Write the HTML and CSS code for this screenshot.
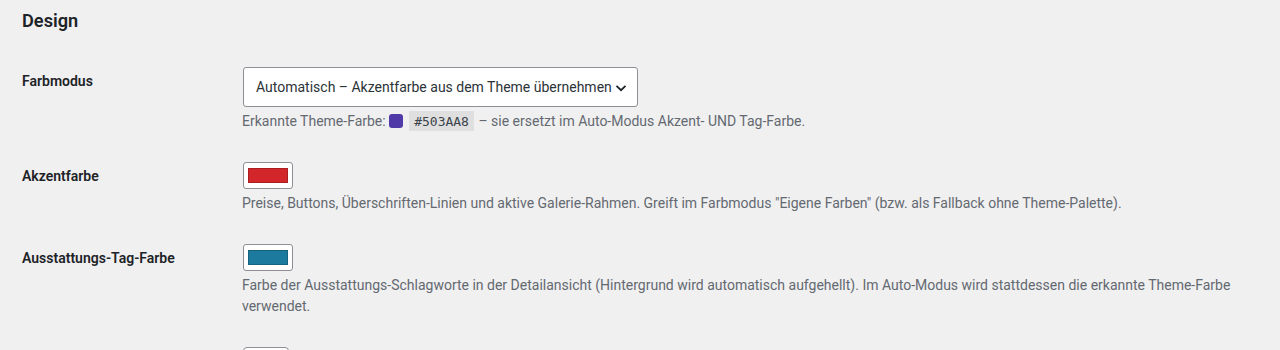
FILE: index.html
```html
<!DOCTYPE html>
<html lang="de">
<head>
    <meta name="viewport" content="width=device-width, initial-scale=1">
    <meta charset="utf-8">
    <link rel="stylesheet" href="styles.css">
</head>
<body>
<div class="wrap">
  <h2>Design</h2>

  <table class="form-table">
    <tr>
      <th>Farbmodus</th>
      <td>
        <div class="select-box">
          <select>
            <option>Automatisch – Akzentfarbe aus dem Theme übernehmen</option>
            <option>Eigene Farben</option>
          </select>
          <svg class="chevron" width="12" height="8" viewBox="0 0 12 8"><path d="M1.5 1.8 6 6.2 10.5 1.8" fill="none" stroke="#1d2327" stroke-width="1.8"/></svg>
        </div>
        <p class="description">
          Erkannte Theme-Farbe: <span class="swatch"></span><code>#503AA8</code> – sie ersetzt im Auto-Modus Akzent- UND Tag-Farbe.
        </p>
      </td>
    </tr>
    <tr>
      <th>Akzentfarbe</th>
      <td>
        <input type="color" value="#d3262b">
        <p class="description">Preise, Buttons, Überschriften-Linien und aktive Galerie-Rahmen. Greift im Farbmodus "Eigene Farben" (bzw. als Fallback ohne Theme-Palette).</p>
      </td>
    </tr>
    <tr>
      <th>Ausstattungs-Tag-Farbe</th>
      <td>
        <input type="color" value="#1b7a9e">
        <p class="description">Farbe der Ausstattungs-Schlagworte in der Detailansicht (Hintergrund wird automatisch aufgehellt). Im Auto-Modus wird stattdessen die erkannte Theme-Farbe verwendet.</p>
      </td>
    </tr>
    <tr>
      <th>Rahmenbreite</th>
      <td>
        <input type="number" class="small-text" value="2">
      </td>
    </tr>
  </table>
</div>
</body>
</html>
```

FILE: styles.css
```css
* {
  box-sizing: border-box;
}
body {
  margin: 0;
  background: #f0f0f1;
  color: #1d2327;
  font-family: Roboto, "Noto Sans", sans-serif;
  font-size: 14px;
  line-height: 1.3;
  overflow: hidden;
}

.wrap {
  padding: 0 20px 0 22px;
}
.wrap h2 {
  font-size: 18.2px;
  font-weight: 600;
  margin: 9px 0 19px;
}

.form-table {
  border-collapse: collapse;
  width: 100%;
}
.form-table th {
  width: 210px;
  padding: 20px 10px 20px 0;
  text-align: left;
  vertical-align: top;
  font-weight: 600;
  line-height: 1.3;
}
.form-table td {
  padding: 15px 10px;
  vertical-align: top;
}

.select-box {
  position: relative;
  display: inline-block;
  margin: 0 1px;
}
.select-box select {
  appearance: none;
  -webkit-appearance: none;
  height: 40px;
  width: 395px;
  padding: 0 24px 0 12px;
  border: 1px solid #8c8f94;
  border-radius: 3px;
  background: #fff;
  color: #2c3338;
  font-family: inherit;
  font-size: 14px;
  display: block;
}
.chevron {
  position: absolute;
  right: 11px;
  top: 17px;
}

.description {
  margin: 4px 0 0;
  color: #646970;
  font-size: 14px;
  line-height: 1.5;
}
.swatch {
  display: inline-block;
  width: 14px;
  height: 14px;
  border-radius: 3px;
  background: #503aa8;
  vertical-align: -2px;
  margin-right: 5px;
}
code {
  font-family: "DejaVu Sans Mono", monospace;
  font-size: 13px;
  padding: 3px 5px 2px;
  margin: 0 1px;
  background: rgba(0, 0, 0, 0.07);
  color: #3c434a;
}

input[type=color] {
  -webkit-appearance: none;
  appearance: none;
  display: block;
  width: 50px;
  height: 27px;
  margin: 0 1px;
  padding: 0;
  border: 1px solid #8c8f94;
  border-radius: 3px;
  background: #fff;
}
input[type=color]::-webkit-color-swatch-wrapper {
  padding: 5px 4px;
}
input[type=color]::-webkit-color-swatch {
  border: 1px solid rgba(0, 0, 0, 0.2);
  border-radius: 0;
}

.small-text {
  display: block;
  width: 46px;
  height: 30px;
  margin: 0 1px;
  border: 1px solid #8c8f94;
  border-radius: 4px;
  background: #fff;
}
```
